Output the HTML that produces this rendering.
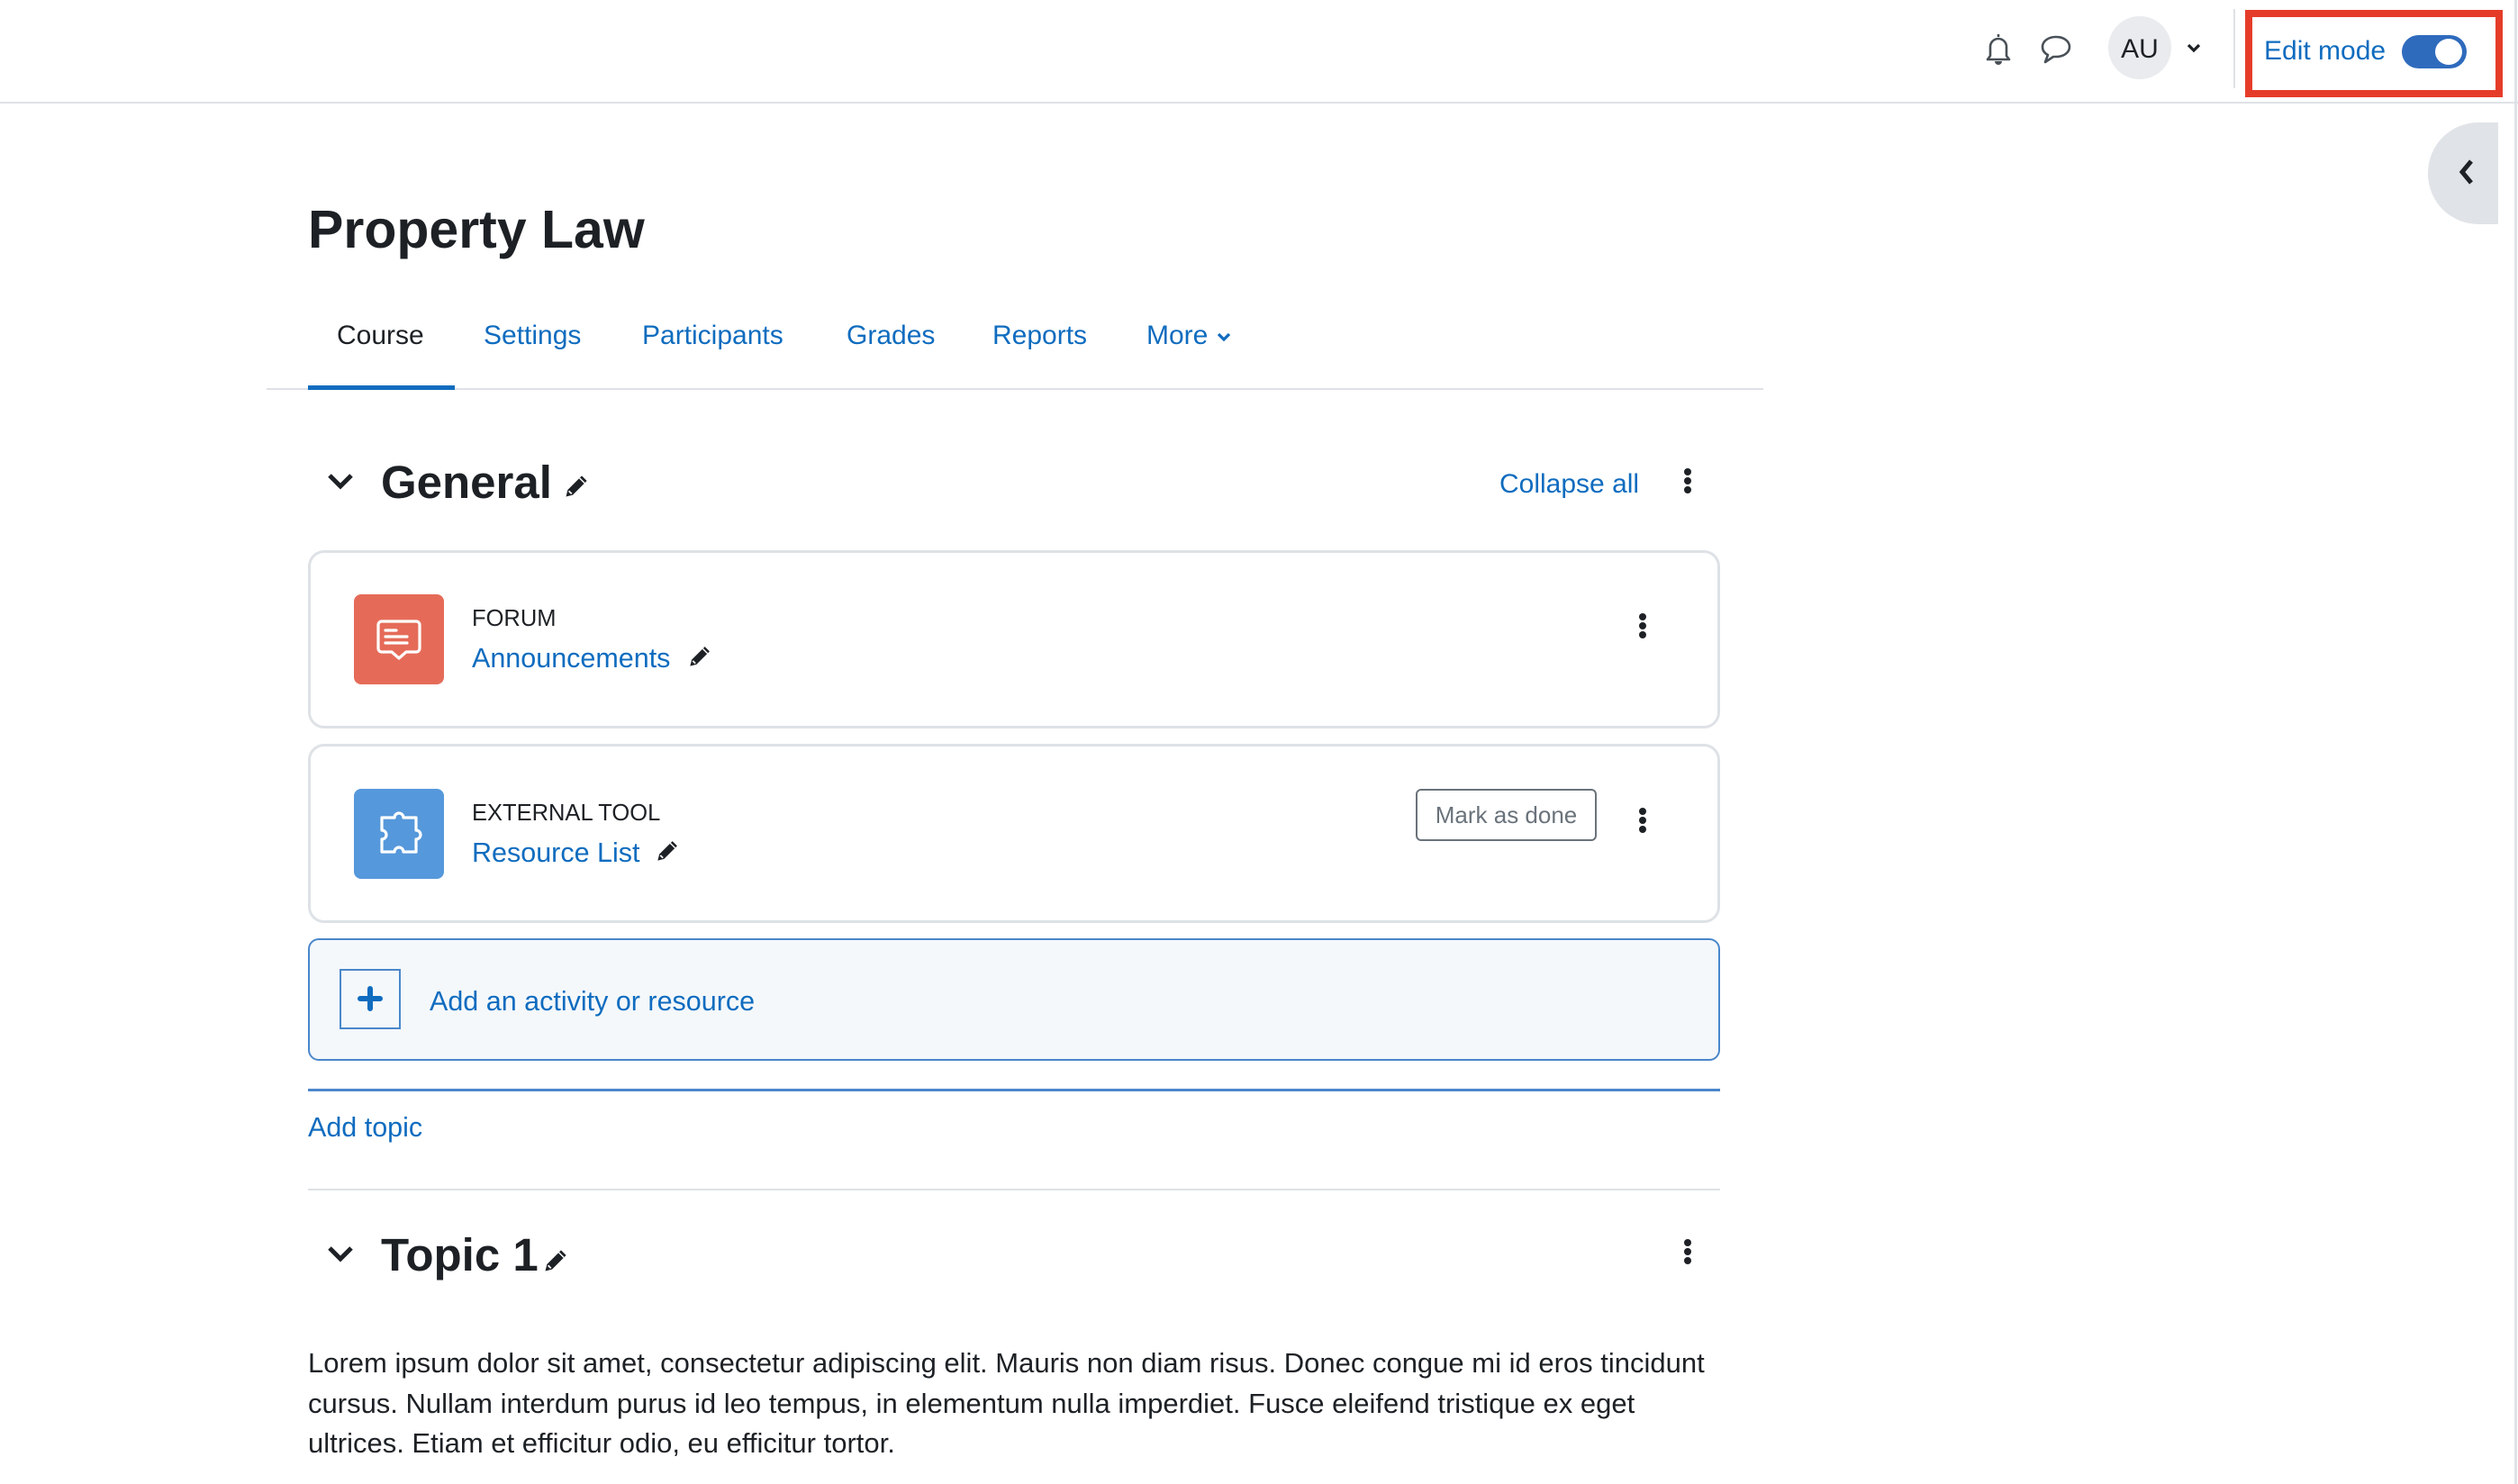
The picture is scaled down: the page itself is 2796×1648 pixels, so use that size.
<!DOCTYPE html>
<html><head><meta charset="utf-8"><style>
*{margin:0;padding:0;box-sizing:border-box}
html,body{width:2796px;height:1648px;overflow:hidden;background:#fff;font-family:"Liberation Sans",sans-serif;color:#1d2125}
.a{position:absolute}
.t{position:absolute;white-space:nowrap;line-height:1}
.lk{color:#0f6cbf}
.kb{position:absolute;width:8px}
.kb i{display:block;width:8px;height:8px;border-radius:50%;background:#1d2125;margin-bottom:2px}
</style></head><body>
<div class="a" style="left:0;top:113px;width:2796px;height:2px;background:#dee2e6"></div>
<svg class="a" style="left:2202px;top:35px" width="34" height="38" viewBox="0 0 34 38"><path d="M17 3v3M8 27V17a9 9 0 0 1 18 0v10l3 4H5z" fill="none" stroke="#495057" stroke-width="2.6" stroke-linejoin="round"/><path d="M13 33a4 4 0 0 0 8 0z" fill="#495057"/></svg>
<svg class="a" style="left:2264px;top:37px" width="38" height="36" viewBox="0 0 38 36"><path d="M19 4C10 4 4 9 4 15c0 4 2 7 6 9l-3 8 9-6h3c9 0 15-5 15-11S28 4 19 4z" fill="none" stroke="#495057" stroke-width="2.6" stroke-linejoin="round"/></svg>
<div class="a" style="left:2341px;top:18px;width:70px;height:70px;border-radius:50%;background:#e9ebee"></div>
<div class="t" style="left:2341px;top:40px;width:70px;text-align:center;font-size:30px;color:#1d2125">AU</div>
<svg class="a" style="left:2428px;top:47px" width="16" height="12" viewBox="0 0 16 12"><path d="M2 3l6 6 6-6" fill="none" stroke="#1d2125" stroke-width="3.2"/></svg>
<div class="a" style="left:2480px;top:10px;width:2px;height:88px;background:#dee2e6"></div>
<div class="a" style="left:2493px;top:11px;width:286px;height:97px;border:8px solid #e53c29"></div>
<div class="t lk" style="left:2514px;top:42px;font-size:30px">Edit mode</div>
<div class="a" style="left:2667px;top:39px;width:72px;height:37px;border-radius:19px;background:#2f6bbd"></div>
<div class="a" style="left:2704px;top:43px;width:30px;height:29px;border-radius:50%;background:#fff"></div>
<div class="a" style="left:2696px;top:136px;width:78px;height:113px;background:#e0e3e7;border-radius:56px 0 0 56px"></div>
<svg class="a" style="left:2729px;top:176px" width="20" height="30" viewBox="0 0 20 30"><path d="M15 3L5 15l10 12" fill="none" stroke="#1d2125" stroke-width="5"/></svg>
<div class="a" style="left:2792px;top:0;width:3px;height:1648px;background:#dee2e6"></div>
<div class="t" style="left:342px;top:226px;font-size:59px;font-weight:bold">Property Law</div>
<div class="t" style="left:374px;top:358px;font-size:30px;color:#1d2125">Course</div>
<div class="t lk" style="left:537px;top:358px;font-size:30px">Settings</div>
<div class="t lk" style="left:713px;top:358px;font-size:30px">Participants</div>
<div class="t lk" style="left:940px;top:358px;font-size:30px">Grades</div>
<div class="t lk" style="left:1102px;top:358px;font-size:30px">Reports</div>
<div class="t lk" style="left:1273px;top:358px;font-size:30px">More</div>
<svg class="a" style="left:1351px;top:368px" width="16" height="12" viewBox="0 0 16 12"><path d="M2 3l6 6 6-6" fill="none" stroke="#0f6cbf" stroke-width="3.2"/></svg>
<div class="a" style="left:296px;top:431px;width:1662px;height:2px;background:#dee2e6"></div>
<div class="a" style="left:342px;top:428px;width:163px;height:5px;background:#0f6cbf"></div>
<svg class="a" style="left:362px;top:524px" width="32" height="22" viewBox="0 0 32 22"><path d="M4 4l12 12 12-12" fill="none" stroke="#1d2125" stroke-width="5"/></svg>
<div class="t" style="left:423px;top:510px;font-size:51px;font-weight:bold">General</div>
<svg class="a" style="left:626px;top:524px" width="30" height="30" viewBox="0 0 24 24"><path d="M2 22l1.5-6L16 3.5l4.5 4.5L8 20.5z" fill="#1d2125"/><path d="M14 5.5l4.5 4.5" stroke="#fff" stroke-width="1.2"/><path d="M4.5 17l2.5 2.5" stroke="#fff" stroke-width="1.5"/></svg>
<div class="t lk" style="left:1665px;top:523px;font-size:30px">Collapse all</div>
<div class="kb" style="left:1870px;top:520px"><i></i><i></i><i></i></div>
<div class="a" style="left:342px;top:611px;width:1568px;height:198px;border:3px solid #dee2e6;border-radius:18px"></div>
<div class="a" style="left:393px;top:660px;width:100px;height:100px;border-radius:8px;background:#e56b58"></div>
<svg class="a" style="left:418px;top:688px" width="50" height="46" viewBox="0 0 50 46"><path d="M6 2h38a4 4 0 0 1 4 4v26a4 4 0 0 1-4 4H33l-8 7-8-7H6a4 4 0 0 1-4-4V6a4 4 0 0 1 4-4z" fill="none" stroke="#fff" stroke-width="3.2" stroke-linejoin="round"/><path d="M10 12h12M10 19h24M10 26h24" stroke="#fff" stroke-width="3.2" stroke-linecap="round"/></svg>
<div class="t" style="left:524px;top:675px;font-size:25.5px">FORUM</div>
<div class="t lk" style="left:524px;top:716px;font-size:30.5px">Announcements</div>
<svg class="a" style="left:764px;top:714px" width="28" height="28" viewBox="0 0 24 24"><path d="M2 22l1.5-6L16 3.5l4.5 4.5L8 20.5z" fill="#1d2125"/><path d="M14 5.5l4.5 4.5" stroke="#fff" stroke-width="1.2"/><path d="M4.5 17l2.5 2.5" stroke="#fff" stroke-width="1.5"/></svg>
<div class="kb" style="left:1820px;top:681px"><i></i><i></i><i></i></div>
<div class="a" style="left:342px;top:826px;width:1568px;height:199px;border:3px solid #dee2e6;border-radius:18px"></div>
<div class="a" style="left:393px;top:876px;width:100px;height:100px;border-radius:8px;background:#5598db"></div>
<svg class="a" style="left:416px;top:898px" width="54" height="54" viewBox="0 0 54 54"><path d="M8 10h14a5 5 0 1 1 10 0h14v14a5 5 0 1 1 0 10v14H32a5 5 0 1 0-10 0H8V34a5 5 0 1 0 0-10z" fill="none" stroke="#fff" stroke-width="3.2" stroke-linejoin="round"/></svg>
<div class="t" style="left:524px;top:891px;font-size:25.5px">EXTERNAL TOOL</div>
<div class="t lk" style="left:524px;top:932px;font-size:30.5px">Resource List</div>
<svg class="a" style="left:728px;top:930px" width="28" height="28" viewBox="0 0 24 24"><path d="M2 22l1.5-6L16 3.5l4.5 4.5L8 20.5z" fill="#1d2125"/><path d="M14 5.5l4.5 4.5" stroke="#fff" stroke-width="1.2"/><path d="M4.5 17l2.5 2.5" stroke="#fff" stroke-width="1.5"/></svg>
<div class="a" style="left:1572px;top:876px;width:201px;height:58px;border:2px solid #6a737b;border-radius:6px"></div>
<div class="t" style="left:1572px;top:892px;width:201px;text-align:center;font-size:26px;color:#6a737b">Mark as done</div>
<div class="kb" style="left:1820px;top:897px"><i></i><i></i><i></i></div>
<div class="a" style="left:342px;top:1042px;width:1568px;height:136px;border:2px solid #4a87cb;border-radius:12px;background:#f4f8fb"></div>
<div class="a" style="left:377px;top:1076px;width:68px;height:67px;border:2px solid #4a87cb"></div>
<svg class="a" style="left:396px;top:1094px" width="30" height="30" viewBox="0 0 30 30"><path d="M15 4v22M4 15h22" stroke="#0f6cbf" stroke-width="6" stroke-linecap="round"/></svg>
<div class="t lk" style="left:477px;top:1097px;font-size:30.5px">Add an activity or resource</div>
<div class="a" style="left:342px;top:1209px;width:1568px;height:3px;background:#4a87cb"></div>
<div class="t lk" style="left:342px;top:1237px;font-size:30.5px">Add topic</div>
<div class="a" style="left:342px;top:1320px;width:1568px;height:2px;background:#dee2e6"></div>
<svg class="a" style="left:362px;top:1382px" width="32" height="22" viewBox="0 0 32 22"><path d="M4 4l12 12 12-12" fill="none" stroke="#1d2125" stroke-width="5"/></svg>
<div class="t" style="left:423px;top:1368px;font-size:51px;font-weight:bold">Topic 1</div>
<svg class="a" style="left:603px;top:1384px" width="30" height="30" viewBox="0 0 24 24"><path d="M2 22l1.5-6L16 3.5l4.5 4.5L8 20.5z" fill="#1d2125"/><path d="M14 5.5l4.5 4.5" stroke="#fff" stroke-width="1.2"/><path d="M4.5 17l2.5 2.5" stroke="#fff" stroke-width="1.5"/></svg>
<div class="kb" style="left:1870px;top:1376px"><i></i><i></i><i></i></div>
<div class="t" style="left:342px;top:1492px;font-size:31px;line-height:44.6px">Lorem ipsum dolor sit amet, consectetur adipiscing elit. Mauris non diam risus. Donec congue mi id eros tincidunt<br>cursus. Nullam interdum purus id leo tempus, in elementum nulla imperdiet. Fusce eleifend tristique ex eget<br>ultrices. Etiam et efficitur odio, eu efficitur tortor.</div>
</body></html>
